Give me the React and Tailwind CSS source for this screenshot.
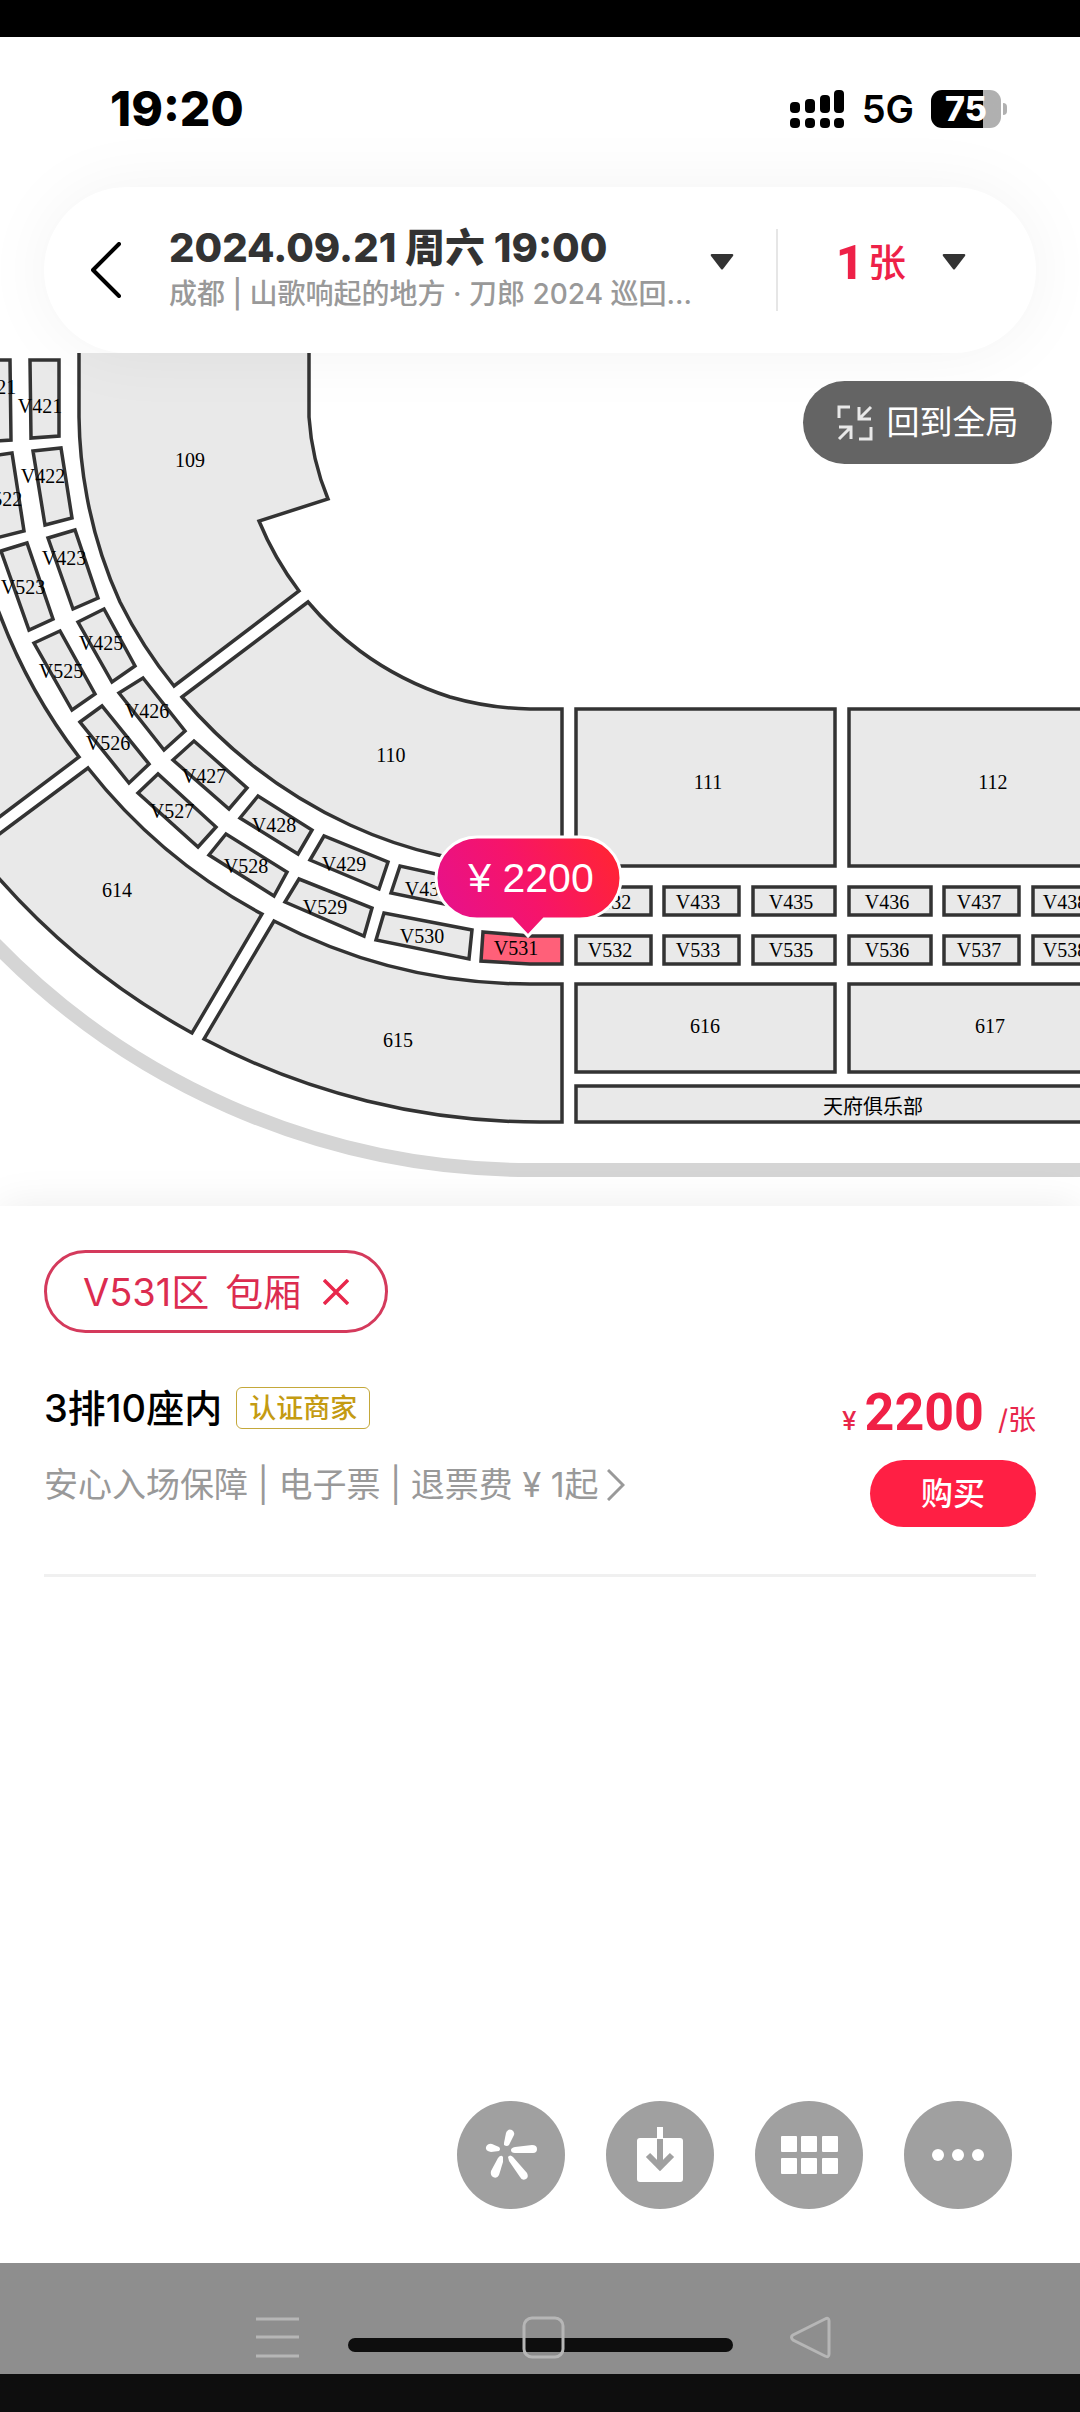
import { useState } from 'react';

const SANS = "font-['Inter','Noto_Sans_CJK_SC',sans-serif]";

// Curved blocks of the stand, already in map units
const BLOCKS = [
  { id: '109', x: 190, y: 467, d: 'M79 340V417A460 460 0 0 0 87 497A450 450 0 0 0 120 602A450 450 0 0 0 174 686L299 591A310 310 0 0 1 259 521L328 499A260 260 0 0 1 309 417V340Z' },
  { id: '110', x: 391, y: 762, d: 'M182 697L308 602A310 310 0 0 0 360 651A310 310 0 0 0 450 697A310 310 0 0 0 530 709H562V866H530A440 440 0 0 1 438 855A450 450 0 0 1 350 825A490 490 0 0 1 182 697Z' },
  { id: '613', x: -60, y: 700, d: 'M-10 590L0 615A552 552 0 0 0 79 757L-10 824Z' },
  { id: '614', x: 117, y: 897, d: 'M88 768A552 552 0 0 0 262 914L192 1033A721 721 0 0 1 -10 868V841Z' },
  { id: '615', x: 398, y: 1047, d: 'M274 921A552 552 0 0 0 530 984H562V1122H540A721 721 0 0 1 204 1039Z' },
  { id: '111', x: 708, y: 789, d: 'M576 709H835V866H576Z' },
  { id: '112', x: 993, y: 789, d: 'M849 709H1100V866H849Z' },
  { id: '616', x: 705, y: 1033, d: 'M576 984H835V1072H576Z' },
  { id: '617', x: 990, y: 1033, d: 'M849 984H1100V1072H849Z' },
  { id: '天府俱乐部', x: 873, y: 1114, d: 'M576 1086H1100V1122H576Z' },
];

const BOXES = [
  { id: 'V421', x: 40, y: 413, p: '30,360 59,360 59,436 31,438' },
  { id: 'V422', x: 43, y: 483, p: '33,451 61,448 72,518 45,525' },
  { id: 'V423', x: 64, y: 565, p: '48,538 75,530 98,598 73,609' },
  { id: 'V425', x: 101, y: 650, p: '78,622 104,609 135,666 112,682' },
  { id: 'V426', x: 147, y: 718, p: '119,693 143,678 185,731 164,750' },
  { id: 'V427', x: 204, y: 783, p: '173,760 194,741 247,788 229,809' },
  { id: 'V428', x: 274, y: 832, p: '240,818 258,796 312,830 298,854' },
  { id: 'V429', x: 344, y: 871, p: '310,860 324,836 388,862 379,889' },
  { id: 'V430', x: 427, y: 896, p: '391,893 400,866 478,883 473,910' },
  { id: 'V432', x: 609, y: 909, p: '576,887 651,887 651,915 576,915' },
  { id: 'V433', x: 698, y: 909, p: '664,887 739,887 739,915 664,915' },
  { id: 'V435', x: 791, y: 909, p: '753,887 835,887 835,915 753,915' },
  { id: 'V436', x: 887, y: 909, p: '849,887 931,887 931,915 849,915' },
  { id: 'V437', x: 979, y: 909, p: '944,887 1019,887 1019,915 944,915' },
  { id: 'V438', x: 1065, y: 909, p: '1033,887 1108,887 1108,915 1033,915' },
  { id: 'V521', x: -6, y: 394, p: '-20,360 10,360 11,440 -18,442' },
  { id: 'V522', x: 0, y: 506, p: '-16,457 12,453 24,531 -4,538' },
  { id: 'V523', x: 23, y: 594, p: '1,551 27,543 53,619 29,630' },
  { id: 'V525', x: 61, y: 678, p: '34,643 60,631 95,694 72,710' },
  { id: 'V526', x: 108, y: 750, p: '80,722 102,706 149,764 129,783' },
  { id: 'V527', x: 172, y: 818, p: '138,793 158,774 216,827 198,847' },
  { id: 'V528', x: 246, y: 873, p: '209,855 226,834 287,872 274,896' },
  { id: 'V529', x: 325, y: 914, p: '285,902 299,879 372,908 364,936' },
  { id: 'V530', x: 422, y: 943, p: '376,940 384,913 472,930 469,959' },
  { id: 'V531', x: 516, y: 955, p: '483,932 530,936 562,936 562,964 530,964 481,961' },
  { id: 'V532', x: 610, y: 957, p: '576,936 651,936 651,964 576,964' },
  { id: 'V533', x: 698, y: 957, p: '664,936 739,936 739,964 664,964' },
  { id: 'V535', x: 791, y: 957, p: '753,936 835,936 835,964 753,964' },
  { id: 'V536', x: 887, y: 957, p: '849,936 931,936 931,964 849,964' },
  { id: 'V537', x: 979, y: 957, p: '944,936 1019,936 1019,964 944,964' },
  { id: 'V538', x: 1065, y: 957, p: '1033,936 1108,936 1108,964 1033,964' },
];

function StatusBar() {
  return (
    <div className="flex h-[144px] items-center justify-between pl-[110px] pr-[73px] text-black">
      <span className="text-[48px] font-extrabold leading-none">19:20</span>
      <div className="flex items-center">
        <svg className="h-[38px] w-[54px]" viewBox="0 0 54 38">
          {[[0, 12, 11], [15, 9, 14], [30, 5, 18], [44, 0, 23]].map(([x, y, h]) => (
            <g key={x}>
              <rect x={x} y={y} width="10" height={h} rx="4" />
              <rect x={x} y="28" width="10" height="10" rx="4" />
            </g>
          ))}
        </svg>
        <span className="ml-[18px] text-[38px] font-semibold leading-none">5G</span>
        <div className="ml-[17px] flex h-[38px] w-[70px] items-center justify-center rounded-[11px] bg-linear-to-r from-black from-75% to-[#b0b0b0] to-75%">
          <span className="text-[34px] font-extrabold leading-none text-white">75</span>
        </div>
        <div className="ml-[2px] h-3 w-1 rounded-r-full bg-[#b0b0b0]" />
      </div>
    </div>
  );
}

function Caret() {
  return (
    <svg className="h-4 w-6 shrink-0" viewBox="0 0 24 16" fill="#333">
      <path d="M2 0H22Q24 0 23 2L13 15Q12 16 11 15L1 2Q0 0 2 0Z" />
    </svg>
  );
}

function SessionBar() {
  return (
    <div className="mx-11 flex h-[166px] items-center rounded-full bg-white pl-[47px] pr-[70px] shadow-[0_0_70px_rgba(0,0,0,0.05)]">
      <button type="button" aria-label="返回" className="mr-12 h-14 w-[30px] shrink-0">
        <svg viewBox="0 0 30 56" fill="none" stroke="#000" strokeWidth="4" strokeLinecap="round" strokeLinejoin="round">
          <path d="M28 2L2 28L28 54" />
        </svg>
      </button>
      <button type="button" className="flex min-w-0 flex-1 items-center justify-between text-left">
        <span className="min-w-0">
          <span className="block whitespace-nowrap text-[40px] font-extrabold leading-[48px] text-[#333]">2024.09.21 周六 19:00</span>
          <span className="block whitespace-nowrap text-[28px] font-medium leading-[44px] text-[#999]">成都 | 山歌响起的地方 · 刀郎 2024 巡回...</span>
        </span>
        <span className="pb-4">
          <Caret />
        </span>
      </button>
      <div className="ml-[42px] h-[82px] w-[2px] bg-[#e6e6e6]" />
      <button type="button" className="ml-[58px] flex items-center gap-9 pb-4 text-[#ee2148]">
        <span className="flex items-center gap-1">
          <span className="font-['Roboto'] text-[49px] font-extrabold leading-none">1</span>
          <span className="text-[38px] font-medium leading-none">张</span>
        </span>
        <Caret />
      </button>
    </div>
  );
}

function SeatMap({ selected }) {
  return (
    <svg className="block w-full" viewBox="0 353 1080 853">
      <defs>
        <linearGradient id="pin" x1="0" y1="0.7" x2="1" y2="0.4">
          <stop offset="0" stopColor="#e6118c" />
          <stop offset="0.5" stopColor="#f6146a" />
          <stop offset="1" stopColor="#ff2338" />
        </linearGradient>
      </defs>
      <path d="M-20 928A746 746 0 0 0 530 1170H1100" fill="none" stroke="#d5d5d5" strokeWidth="14" />
      <g fill="#e9e9e9" stroke="#333" strokeWidth="3.5">
        {BLOCKS.map((b) => (
          <path key={b.id} d={b.d} />
        ))}
        {BOXES.map((b) => (
          <polygon key={b.id} points={b.p} fill={b.id === selected ? '#ff6079' : '#e9e9e9'} />
        ))}
      </g>
      <g className="font-['Liberation_Serif','Noto_Sans_CJK_SC',serif] text-[20px]" textAnchor="middle">
        {[...BLOCKS, ...BOXES].map((b) => (
          <text key={b.id} x={b.x} y={b.y}>{b.id}</text>
        ))}
      </g>
      <path
        d="M477 837H580A41 41 0 0 1 580 919H544L528 936L512 919H477A41 41 0 0 1 477 837Z"
        fill="url(#pin)"
        stroke="#fff"
        strokeWidth="3"
      />
      <text x="531" y="892" textAnchor="middle" fill="#fff" className="font-['Liberation_Sans','Noto_Sans_CJK_SC',sans-serif] text-[41px]">¥ 2200</text>
    </svg>
  );
}

function TicketRow() {
  return (
    <div className="flex items-start justify-between border-b-[3px] border-[#f0f0f0] pb-[47px]">
      <div>
        <div className="flex h-[42px] items-center gap-[14px]">
          <h2 className="text-[38px] font-medium leading-none text-black">3排10座内</h2>
          <span className="flex h-[42px] items-center rounded-md border-[1px] border-[#c4a83a] px-3 text-[27px] font-medium leading-none text-[#c49b12]">认证商家</span>
        </div>
        <a href="#rules" className="mt-[34px] flex items-center gap-2 text-[34px] leading-[44px] text-[#999]">
          安心入场保障 | 电子票 | 退票费 ¥ 1起
          <svg className="h-8 w-[18px]" viewBox="0 0 18 32" fill="none" stroke="#999" strokeWidth="3">
            <path d="M1 1L16 16L1 31" />
          </svg>
        </a>
      </div>
      <div className="flex flex-col items-end">
        <p className="flex h-12 items-baseline text-[#e8274b]">
          <span className="text-[26px] font-medium">¥</span>
          <span className="ml-2 mr-[14px] font-['Roboto'] text-[52px] font-bold leading-none text-[#f02046]">2200</span>
          <span className="text-[28px]">/张</span>
        </p>
        <button type="button" className="mt-[25px] h-[67px] w-[166px] rounded-full bg-[#ff1f44] text-[32px] font-medium leading-none text-white">购买</button>
      </div>
    </div>
  );
}

const TOOLS = [
  {
    label: '识别',
    icon: (
      <g fill="#fff">
        <path d="M47 42L49 32Q51 27 55 29Q58 31 57 34L52 44Q50 46 47 44Z" />
        <path d="M42 50L34 51Q28 50 29 46Q31 42 35 43L42 46Q44 48 42 50Z" />
        <path d="M54 49Q54 47 58 46L75 44Q80 44 80 48Q80 52 76 52H58Q54 52 54 49Z" />
        <path d="M41 57Q44 53 46 56L46 61L42 74Q40 78 36 76Q33 74 34 70Z" />
        <path d="M51 56Q53 53 56 56L70 72Q72 76 69 78Q65 80 63 76L52 60Z" />
      </g>
    ),
  },
  {
    label: '保存',
    icon: (
      <g>
        <rect x="31" y="37" width="46" height="44" rx="3" fill="#fff" />
        <rect x="51" y="26" width="6" height="11" fill="#fff" />
        <path d="M54 38V66M42 54L54 66L66 54" fill="none" stroke="#a0a0a0" strokeWidth="6" />
      </g>
    ),
  },
  {
    label: '更多图片',
    icon: (
      <g fill="#fff">
        {[26, 46, 67].map((x) => (
          <g key={x}>
            <rect x={x} y="35" width="16" height="16" rx="1" />
            <rect x={x} y="57" width="16" height="16" rx="1" />
          </g>
        ))}
      </g>
    ),
  },
  {
    label: '更多',
    icon: (
      <g fill="#fff">
        <circle cx="34" cy="54" r="6" />
        <circle cx="54" cy="54" r="6" />
        <circle cx="74" cy="54" r="6" />
      </g>
    ),
  },
];

function NavBar() {
  return (
    <nav className="relative h-[111px] bg-[#8e8e8e] pl-[144px] pr-[136px] pt-[53px]">
      <div className="absolute bottom-[22px] left-[348px] right-[347px] h-[14px] rounded-full bg-[#0e0e0e]" />
      <div className="relative grid grid-cols-3 justify-items-center">
        <button type="button" aria-label="菜单">
          <svg className="h-[43px] w-[43px]" viewBox="0 0 43 43" stroke="#b6b6b6" strokeWidth="3">
            <path d="M0 3H43M0 21H43M0 40H43" />
          </svg>
        </button>
        <button type="button" aria-label="主页">
          <svg className="h-[43px] w-[43px]" viewBox="0 0 43 43" fill="none" stroke="#b6b6b6" strokeWidth="3">
            <rect x="2" y="2" width="39" height="39" rx="8" />
          </svg>
        </button>
        <button type="button" aria-label="后退">
          <svg className="h-[43px] w-[43px]" viewBox="0 0 43 43" fill="none" stroke="#b6b6b6" strokeWidth="3">
            <path d="M36 3Q40 1 40 5V38Q40 42 36 40L4 24Q1 21 4 19Z" />
          </svg>
        </button>
      </div>
    </nav>
  );
}

export default function App() {
  const [selected, setSelected] = useState('V531');

  return (
    <div className={`flex min-h-screen flex-col overflow-hidden bg-white ${SANS}`}>
      <div className="h-[37px] bg-black" />
      <header className="relative z-10">
        <StatusBar />
        <div className="pt-[6px]">
          <SessionBar />
        </div>
      </header>

      <section className="relative">
        <SeatMap selected={selected} />
        <button type="button" className="absolute right-7 top-7 z-20 flex h-[83px] w-[249px] items-center justify-center gap-[14px] rounded-full bg-[#646464] text-white">
          <svg className="h-9 w-9" viewBox="0 0 36 36" fill="none" stroke="#e8e8e8" strokeWidth="3">
            <path d="M2 13V2H13M34 2L22 14M22 2V14H34M2 34L14 22M2 22H14V34M34 22V34H22" />
          </svg>
          <span className="text-[33px] leading-none">回到全局</span>
        </button>
      </section>

      <main className="relative z-10 flex flex-1 flex-col bg-white px-11 pt-11 shadow-[0_0_40px_rgba(0,0,0,0.08)]">
        <div className="h-[83px]">
          {selected && (
            <button
              type="button"
              onClick={() => setSelected(null)}
              className="flex h-[83px] items-center rounded-full border-[3px] border-[#d43a5c] px-9 text-[38px] leading-none text-[#dc2c50]"
            >
              <span>{selected}区</span>
              <span className="ml-4">包厢</span>
              <svg className="ml-[22px] h-[26px] w-[26px]" viewBox="0 0 26 26" stroke="#e8274b" strokeWidth="3.5">
                <path d="M1 1L25 25M25 1L1 25" />
              </svg>
            </button>
          )}
        </div>
        <div className="mt-[54px]">
          <TicketRow />
        </div>
        <div className="mb-[54px] mt-auto flex justify-end gap-[41px] pr-6">
          {TOOLS.map((tool) => (
            <button key={tool.label} type="button" aria-label={tool.label} className="h-[108px] w-[108px] rounded-full bg-[#a0a0a0]">
              <svg viewBox="0 0 108 108">{tool.icon}</svg>
            </button>
          ))}
        </div>
      </main>

      <div className="relative z-10">
        <NavBar />
        <div className="h-[38px] bg-[#0e0e0e]" />
      </div>
    </div>
  );
}
